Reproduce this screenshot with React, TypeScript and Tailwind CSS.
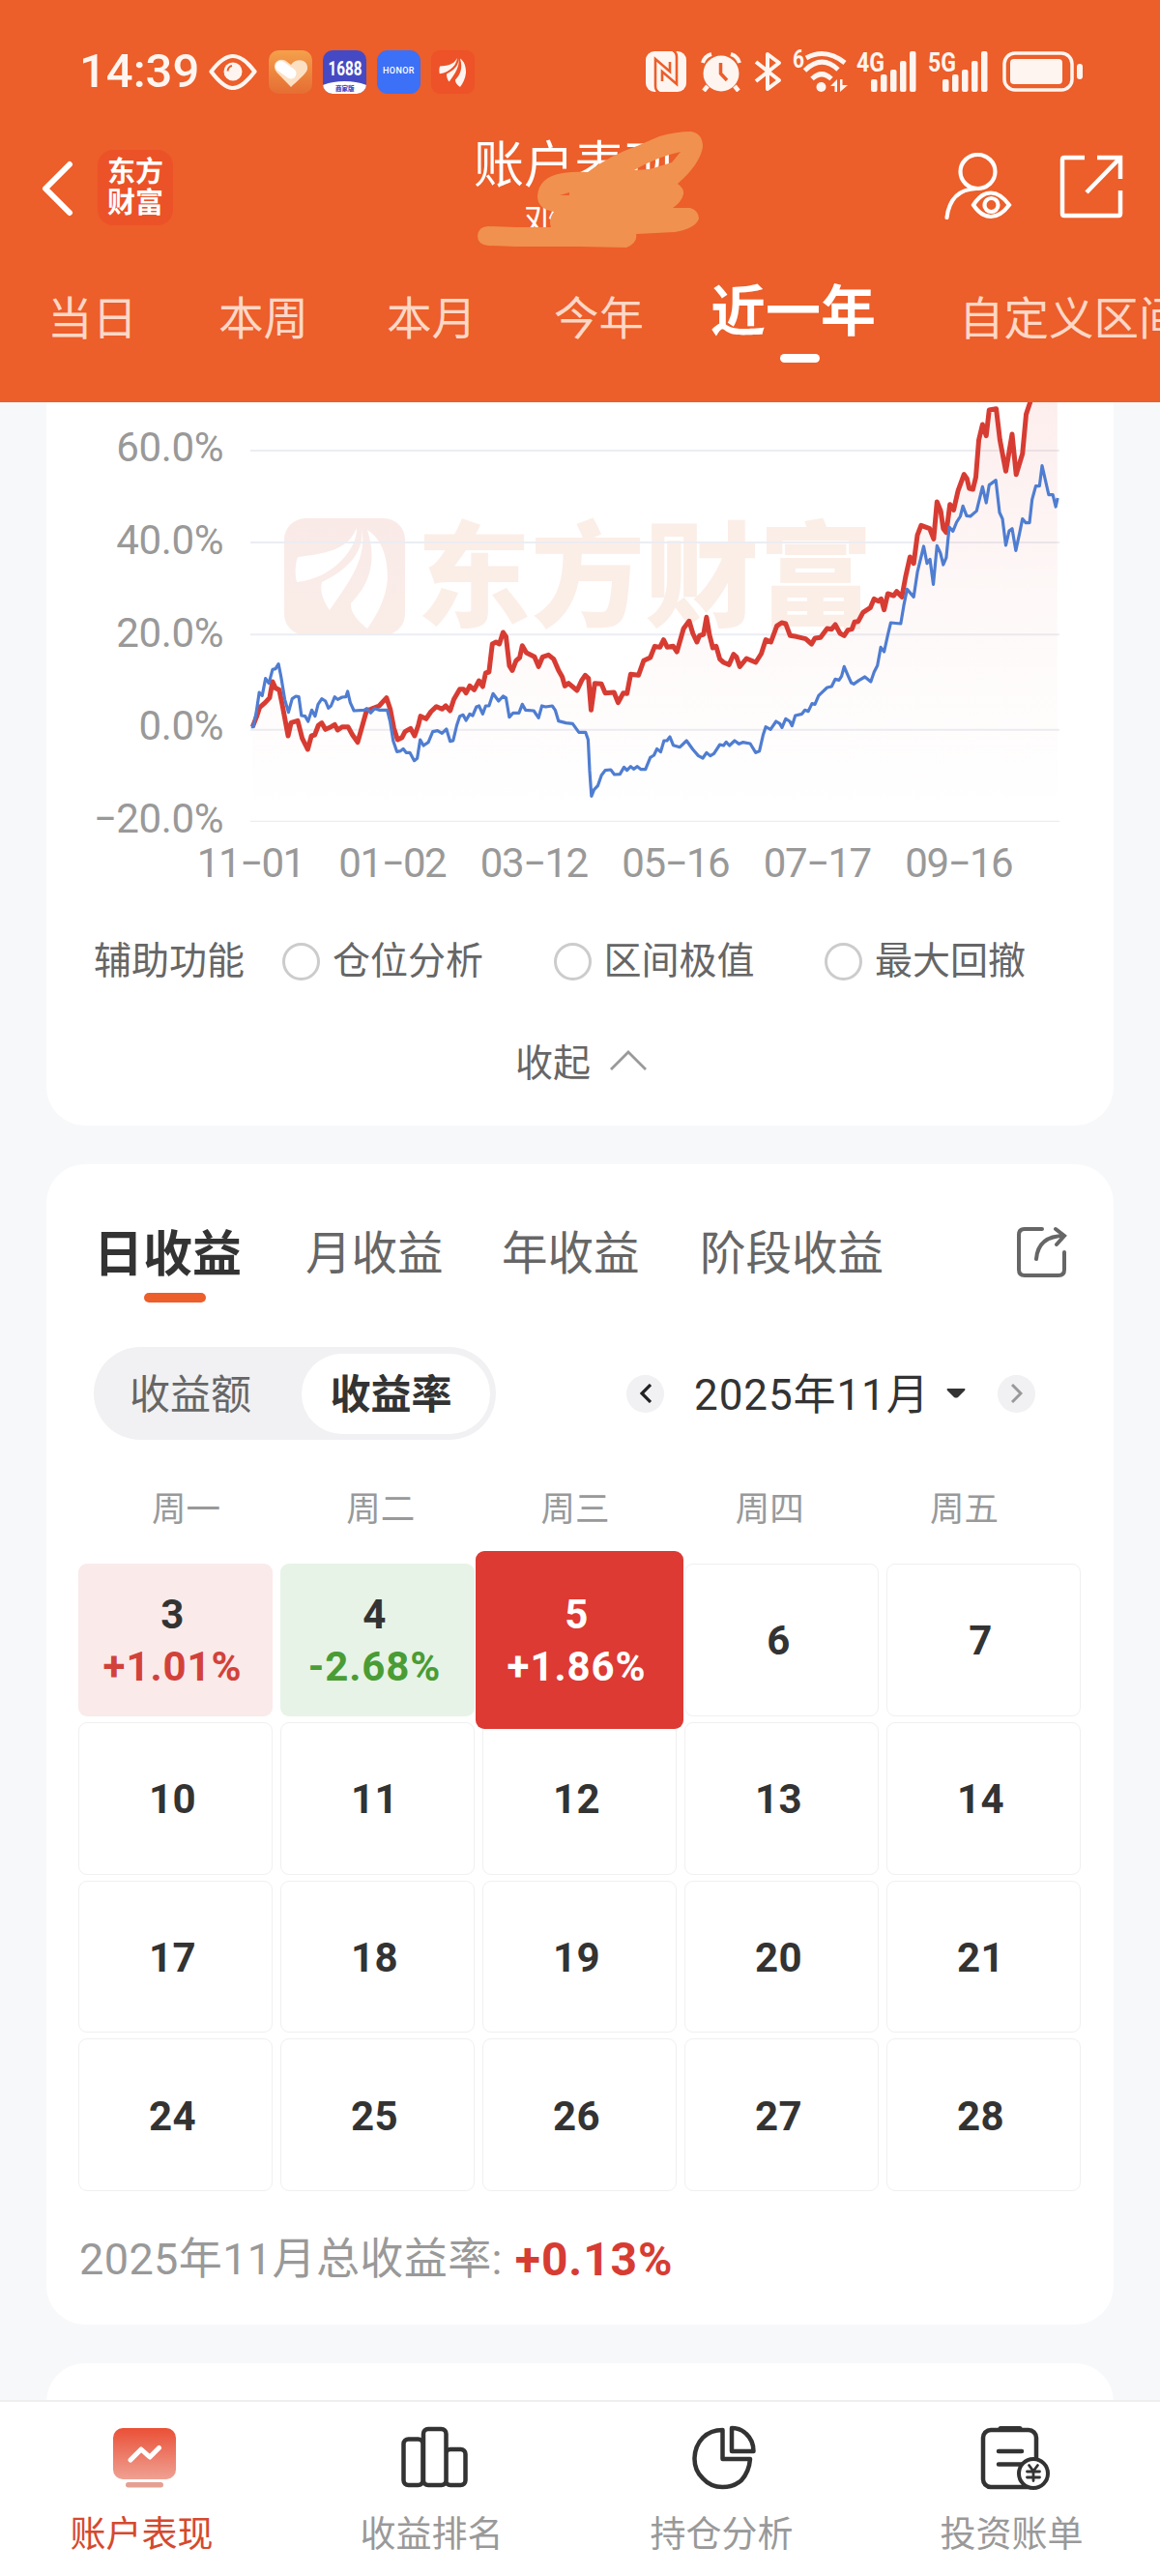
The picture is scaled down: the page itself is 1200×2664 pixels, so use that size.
import React from 'react';

const RED_LINE =
  '578,1055 590,1020 597,995 612,980 624,965 632,915 640,935 650,940 658,985 674,1083 682,1042 700,1036 712,1090 727,1125 737,1083 746,1080 756,1050 765,1043 775,1063 790,1055 800,1048 808,1065 820,1055 836,1055 848,1080 862,1103 875,1050 886,1005 898,1000 920,990 940,965 950,1000 960,1060 970,1095 982,1088 990,1070 1005,1060 1016,1083 1026,1050 1032,1022 1047,1030 1060,1008 1075,992 1090,1000 1100,990 1112,1005 1122,970 1138,938 1148,938 1155,950 1165,928 1177,940 1190,912 1200,930 1208,888 1217,885 1226,798 1236,792 1245,798 1255,762 1263,775 1272,865 1280,880 1290,850 1300,840 1307,803 1318,825 1340,838 1351,868 1362,838 1378,832 1392,845 1405,880 1415,900 1422,928 1432,920 1455,942 1468,910 1477,895 1486,905 1493,1003 1503,920 1521,922 1531,950 1555,948 1566,980 1580,950 1590,952 1600,892 1621,895 1635,850 1653,840 1665,805 1679,808 1689,785 1699,808 1715,805 1725,822 1743,750 1758,727 1768,765 1779,792 1786,772 1797,768 1805,715 1813,770 1822,810 1831,805 1841,845 1851,855 1866,862 1878,830 1886,838 1895,868 1913,843 1938,855 1953,828 1965,785 1979,792 1995,742 2008,732 2019,735 2031,772 2048,775 2073,782 2089,798 2098,780 2113,778 2131,750 2143,752 2153,738 2166,765 2177,772 2187,755 2198,752 2205,730 2215,728 2228,700 2248,685 2258,658 2269,665 2277,658 2285,692 2295,642 2311,648 2319,635 2333,652 2343,590 2355,528 2365,548 2375,460 2385,430 2408,440 2419,472 2428,357 2438,385 2445,440 2453,452 2463,365 2473,382 2485,322 2501,272 2509,285 2515,315 2525,318 2533,280 2541,165 2551,117 2561,152 2569,72 2588,68 2598,165 2614,262 2631,147 2642,272 2659,208 2669,85 2685,30';

const BLUE_LINE =
  '574,1055 580,1055 588,1010 596,948 604,958 613,905 622,920 632,877 640,875 648,860 655,900 665,970 675,1010 685,968 695,960 703,962 710,1020 720,1022 728,1038 738,1003 747,1022 755,985 765,968 775,975 783,997 790,990 800,962 808,970 820,963 830,962 835,945 842,980 852,1005 880,1003 887,998 897,1012 908,998 920,1003 942,1003 950,1040 958,1098 968,1132 978,1130 985,1123 993,1135 1003,1135 1015,1160 1023,1153 1031,1095 1040,1113 1053,1103 1065,1070 1078,1067 1090,1075 1102,1062 1112,1100 1120,1098 1130,1050 1138,1022 1147,1018 1155,1035 1165,1015 1173,1020 1183,993 1190,990 1200,1015 1208,990 1217,990 1228,952 1243,975 1255,960 1263,965 1272,1025 1282,1012 1298,1012 1307,985 1316,1003 1338,1005 1351,1027 1360,990 1370,993 1388,990 1396,1003 1405,1037 1425,1043 1443,1045 1460,1072 1478,1072 1485,1095 1489,1190 1494,1270 1501,1250 1511,1238 1521,1205 1531,1190 1546,1188 1556,1203 1571,1202 1582,1180 1590,1190 1600,1178 1608,1186 1618,1178 1628,1187 1640,1187 1653,1150 1663,1143 1671,1123 1681,1133 1690,1098 1698,1098 1706,1086 1715,1112 1733,1118 1751,1098 1768,1125 1783,1145 1795,1152 1805,1135 1815,1145 1825,1138 1841,1110 1851,1113 1858,1102 1867,1113 1881,1098 1893,1108 1903,1103 1923,1107 1938,1135 1948,1130 1958,1080 1965,1055 1978,1063 1993,1038 2003,1045 2009,1057 2019,1030 2030,1038 2036,1052 2045,1020 2063,1015 2071,1003 2080,1007 2090,983 2098,985 2108,958 2131,933 2143,930 2153,907 2163,910 2170,898 2177,868 2187,895 2196,918 2203,922 2218,910 2233,900 2249,915 2258,885 2267,865 2276,808 2285,822 2295,770 2303,732 2330,735 2338,680 2347,628 2365,652 2375,575 2392,495 2401,548 2409,535 2418,613 2428,493 2437,515 2445,552 2453,530 2461,435 2471,448 2481,420 2491,402 2498,370 2508,400 2518,402 2535,385 2551,310 2561,360 2569,305 2587,290 2597,390 2605,410 2614,492 2623,447 2631,440 2641,508 2651,455 2659,410 2668,422 2678,422 2685,350 2695,308 2705,308 2712,245 2723,300 2730,335 2741,335 2749,372 2754,345';

const gridLines = [198, 483, 769, 1064, 1349];
const yLabels = ['60.0%', '40.0%', '20.0%', '0.0%', '−20.0%'];
const xLabels = ['11−01', '01−02', '03−12', '05−16', '07−17', '09−16'];
const helpers = ['仓位分析', '区间极值', '最大回撤'];
const weekdays = ['周一', '周二', '周三', '周四', '周五'];

const days = [
  { day: 3, rate: '+1.01%', tone: 'up' },
  { day: 4, rate: '-2.68%', tone: 'down' },
  { day: 5, rate: '+1.86%', tone: 'active' },
  ...[6, 7, 10, 11, 12, 13, 14, 17, 18, 19, 20, 21, 24, 25, 26, 27, 28].map((day) => ({
    day,
    rate: '',
    tone: 'empty',
  })),
];

const Feather = ({ fill }: { fill: string }) => (
  <g fill={fill}>
    <path d="M75 10 C76 30 52 62 13 66 C11 58 11 48 14 40 C38 37 66 34 75 10Z" />
    <path d="M80 10 C86 40 70 62 47 95 C42 88 36 76 39 66 C60 56 84 38 80 10Z" />
    <path d="M86 12 C102 22 107 42 107 62 C105 84 96 100 86 114 C78 108 68 98 69 88 C84 72 98 50 86 12Z" />
  </g>
);

const Signal = ({ label }: { label: string }) => (
  <svg className="overflow-visible" width="64" height="46" viewBox="0 0 64 46">
    <text x="0" y="23" fontSize="27" fontWeight="700" fill="#fff5f0" textLength="29" lengthAdjust="spacingAndGlyphs" fontFamily="Roboto, sans-serif">
      {label}
    </text>
    <rect x="15" y="31" width="6.500" height="13" rx="2" fill="#fff5f0" />
    <rect x="25" y="26" width="6.500" height="18" rx="2" fill="#fff5f0" />
    <rect x="35" y="21" width="6.500" height="23" rx="2" fill="#fff5f0" />
    <rect x="45" y="12" width="6.500" height="32" rx="2" fill="#fff5f0" />
    <rect x="55" y="2" width="6.500" height="42" rx="2" fill="#fff5f0" />
  </svg>
);

const StatusBar = () => (
  <div className="flex h-[148px] items-center pl-[82px] text-[#fff5f0]">
    <span className="w-[122px] text-[49px] leading-[60px] font-medium whitespace-nowrap">14:39</span>
    <svg className="ml-3" width="50" height="38" viewBox="0 -2 50 38" fill="none" stroke="#fff5f0">
      <path d="M2.500 17 C10 7 17 1 25 1 S40 7 47.500 17 C40 27 33 34 25 34 S10 27 2.500 17Z" strokeWidth="4.200" strokeLinejoin="round" />
      <circle cx="25" cy="17" r="9.500" fill="#fff5f0" stroke="none" />
      <path d="M19.500 16.500 Q20 12 24 11" stroke="#ec5e2a" strokeWidth="2" />
    </svg>
    <svg className="ml-3" width="45" height="45" viewBox="0 0 45 45">
      <defs>
        <linearGradient id="heartBg" x1="0" y1="0" x2="0" y2="1">
          <stop offset="0" stopColor="#f4a04b" />
          <stop offset="1" stopColor="#e56d33" />
        </linearGradient>
      </defs>
      <rect width="45" height="45" rx="10" fill="url(#heartBg)" />
      <path d="M23 38 L8.500 23 C2 15 9 7 17 10.500 L23 15 C29 7 41 10 40 19 C39.500 23 36 26 23 38Z" fill="#fce0c4" />
      <path d="M12.500 16.500 L23 24" stroke="#fff" strokeWidth="11" strokeLinecap="round" />
    </svg>
    <svg className="ml-[11px] overflow-visible" width="45" height="45" viewBox="0 0 45 45">
      <clipPath id="app1688">
        <rect width="45" height="45" rx="10" />
      </clipPath>
      <g clipPath="url(#app1688)">
        <rect width="45" height="45" fill="#454ac4" />
        <ellipse cx="22.500" cy="44" rx="30" ry="12" fill="#fff" />
      </g>
      <text x="5.500" y="26" fontSize="20" fontWeight="700" fill="#fff" textLength="35" lengthAdjust="spacingAndGlyphs" fontFamily="Roboto, sans-serif">1688</text>
      <text x="13" y="41.500" fontSize="6.500" fontWeight="900" fill="#454ac4" fontFamily="'Noto Sans CJK SC', sans-serif">商家版</text>
    </svg>
    <div className="ml-[11px] flex h-[45px] w-[45px] items-center justify-center rounded-[11px] bg-[#3c70f6] text-[9px] font-medium tracking-[0.4px] text-white">
      HONOR
    </div>
    <svg className="ml-[11px]" width="45" height="45" viewBox="0 0 45 45">
      <rect width="45" height="45" rx="9" fill="#ed5228" />
      <g transform="translate(5 5) scale(.29 .29)">
        <Feather fill="#fff5f0" />
      </g>
    </svg>

    <svg className="ml-[177px]" width="42" height="42" viewBox="0 0 42 42">
      <rect width="42" height="42" rx="9" fill="#fff5f0" />
      <g fill="none" stroke="#ec5e2a" strokeWidth="2.600">
        <path d="M14 43 Q10 41 10 36 V8 L25 21 V11" />
        <path d="M28 -1 Q32 1 32 6 V34 L17 21 V31" />
      </g>
    </svg>
    <svg className="ml-[15px]" width="42" height="42" viewBox="0 0 42 42">
      <circle cx="21" cy="23" r="18.500" fill="#fff5f0" />
      <path d="M2 12 Q4 5 11 3 M40 12 Q38 5 31 3" stroke="#fff5f0" strokeWidth="4" fill="none" />
      <path d="M7 36 L3 41 M35 36 L39 41" stroke="#fff5f0" strokeWidth="4.500" />
      <path d="M20.500 12 V23 L27 30" stroke="#ec5e2a" strokeWidth="3.500" fill="none" />
    </svg>
    <svg className="ml-[13px]" width="29" height="42" viewBox="0 0 29 42" fill="none" stroke="#fff5f0" strokeWidth="4" strokeLinejoin="round">
      <path d="M2 11 L26 30 L14 39 V3 L26 12 L2 31" />
    </svg>
    <svg className="ml-[11px] overflow-visible" width="57" height="46" viewBox="0 0 57 46">
      <text x="0" y="19" fontSize="25" fontWeight="700" fill="#fff5f0" textLength="12" lengthAdjust="spacingAndGlyphs" fontFamily="Roboto, sans-serif">6</text>
      <g fill="none" stroke="#fff5f0" strokeWidth="5">
        <path d="M14 9 Q34 -2 54 14" />
        <path d="M12.500 22 Q30 5 47 21" />
        <path d="M20 30.500 Q30 21 40 30.500" />
      </g>
      <circle cx="29.500" cy="39" r="5" fill="#fff5f0" />
      <path d="M39 38 L46 31 V44 H43.500 V38Z M49 31 H51.500 V37 H57 L49 44Z" fill="#fff5f0" />
    </svg>
    <div className="mr-[13px] ml-[9px] flex gap-[10px]">
      <Signal label="4G" />
      <Signal label="5G" />
    </div>
    <svg width="84" height="42" viewBox="0 0 84 42">
      <rect x="2" y="2" width="70" height="38" rx="11" fill="none" stroke="#fff5f0" strokeWidth="3.500" />
      <rect x="8" y="8" width="54" height="26" rx="4" fill="#fff5f0" />
      <rect x="77" y="13" width="6" height="16" rx="3" fill="#fff5f0" />
    </svg>
  </div>
);

const TitleBar = () => (
  <div className="relative flex h-[106px] items-center">
    <svg className="mt-[-13px] ml-[43px]" width="33" height="58" viewBox="0 0 33 58" fill="none" stroke="#fff" strokeWidth="6" strokeLinecap="round" strokeLinejoin="round">
      <path d="M29 4 L4 29 L29 54" />
    </svg>
    <div className="mt-[-14px] ml-[25px] flex h-[78px] w-[78px] flex-col items-center justify-center rounded-[16px] bg-[#ec5228] text-[29px] leading-[32px] font-bold text-white">
      <span>东方</span>
      <span>财富</span>
    </div>
    <div className="ml-[310px] flex h-full w-[210px] flex-col items-center text-white">
      <span className="mt-[-4px] text-[52px] leading-[56px] whitespace-nowrap">账户表现</span>
      <span className="mt-[12px] mr-[68px] text-[36px] leading-[36px]">邓</span>
    </div>
    <svg className="mt-[-17px] ml-[278px]" width="70" height="70" viewBox="0 0 70 70" fill="none" stroke="#fff" strokeWidth="4.200" strokeLinecap="round">
      <ellipse cx="34.500" cy="19.500" rx="18" ry="17.500" />
      <path d="M2.500 67 Q6 38 33 37" />
      <path d="M30 54 Q38 41.500 48 41.500 T67 54 Q58 66 48 66 T30 54Z" />
      <circle cx="48.500" cy="54" r="7" />
    </svg>
    <svg className="mt-[-17px] ml-[49px]" width="66" height="66" viewBox="0 0 66 66" fill="none" stroke="#fff" strokeWidth="4.500">
      <path d="M26 3 H5 Q3 3 3 5 V61 Q3 63 5 63 H61 Q63 63 63 61 V37" />
      <path d="M39 3 H63 V25 M63 3 L28 39" />
    </svg>
    {/* marker strokes hiding the account name */}
    <svg className="absolute top-[-18px] left-[490px]" width="240" height="130" viewBox="490 130 240 130">
      <path
        fillRule="evenodd"
        fill="#f0914f"
        d="M505 234 L534 235 L570 235 Q567 227 573 219 Q556 216 556 203 Q557 183 582 179 Q595 177 608 178 Q632 160 659 151 L682 141 Q700 136 715 136 Q727 138 727 152 Q724 170 701 190 Q708 195 707 201 Q705 209 696 215 H714 Q723 218 723 226 Q720 236 698 240 L658 242 Q660 251 648 256 L600 255 H534 L505 254 Q494 253 494 244 Q495 234 505 234Z M656 176 L672 175 L695 168 L704 157 Q680 162 656 176Z M579 202 L589 202 V199Z"
      />
    </svg>
  </div>
);

const RangeTabs = () => (
  <div className="flex h-[162px] pl-[49px] text-[46.500px] leading-[153px] whitespace-nowrap text-[#fdd7c6]">
    <span className="w-[177px] shrink-0">当日</span>
    <span className="w-[174px] shrink-0">本周</span>
    <span className="w-[173px] shrink-0">本月</span>
    <span className="w-[162px] shrink-0">今年</span>
    <div className="flex w-[257px] shrink-0 flex-col text-[57px] font-bold text-white">
      <span className="mt-[-4px] h-[116px] leading-[146px]">近一年</span>
      <span className="ml-[72px] h-[9px] w-[41px] rounded-full bg-white" />
    </div>
    <span className="shrink-0">自定义区间</span>
  </div>
);

const ProfitChart = () => (
  <section className="mx-[48px] h-[748px] w-[1104px] rounded-b-[40px] bg-white">
    <div className="relative flex h-[434px]">
      <div className="absolute top-[116px] left-[246px] flex items-center">
        <svg width="125" height="121" viewBox="0 0 125 121">
          <defs>
            <linearGradient id="markBg" x1="0" y1="0" x2="0" y2="1">
              <stop offset="0" stopColor="#f9eae8" />
              <stop offset="1" stopColor="#faede7" />
            </linearGradient>
          </defs>
          <rect width="125" height="121" rx="22" fill="url(#markBg)" />
          <Feather fill="#fff" />
        </svg>
        <span className="mt-[7px] ml-[12px] text-[118px] leading-[121px] font-black text-[#fbeee7]">东方财富</span>
      </div>
      <div className="mt-[-1px] w-[183px] text-right text-[42px] leading-[96px] tracking-[-0.400px] text-[#999]">
        {yLabels.map((label) => (
          <div key={label}>{label}</div>
        ))}
      </div>
      <svg className="relative ml-[28px]" width="837" height="434" viewBox="572 48 2187 1302" preserveAspectRatio="none">
        <defs>
          <linearGradient id="area" gradientUnits="userSpaceOnUse" x1="0" y1="48" x2="0" y2="1320">
            <stop offset="0" stopColor="#e0443a" stopOpacity="0.09" />
            <stop offset="0.5" stopColor="#e0443a" stopOpacity="0.035" />
            <stop offset="1" stopColor="#e0443a" stopOpacity="0" />
          </linearGradient>
        </defs>
        {gridLines.map((y) => (
          <line key={y} x1="572" x2="2759" y1={y} y2={y} stroke="#ebedf2" strokeWidth="2" vectorEffect="non-scaling-stroke" />
        ))}
        <polygon points={`${RED_LINE} 2753,30 2753,1320 578,1320`} fill="url(#area)" />
        <polyline points={RED_LINE} fill="none" stroke="#d73c33" strokeWidth="5" strokeLinejoin="round" vectorEffect="non-scaling-stroke" />
        <polyline points={BLUE_LINE} fill="none" stroke="#4f7dd1" strokeWidth="3.200" strokeLinejoin="round" vectorEffect="non-scaling-stroke" />
      </svg>
    </div>
    <div className="ml-[138px] flex text-[42px] leading-[85px] tracking-[-1.500px] text-[#999]">
      {xLabels.map((label) => (
        <span key={label} className="w-[146.500px] text-center">
          {label}
        </span>
      ))}
    </div>
    <div className="mt-[19px] flex h-[80px] items-center pl-[49px] text-[39px] leading-none whitespace-nowrap text-[#666]">
      <span className="w-[195px]">辅助功能</span>
      {helpers.map((name) => (
        <div key={name} className="flex w-[280.500px] shrink-0 items-center">
          <span className="mr-[13px] h-[39px] w-[39px] rounded-full border-[3px] border-[#ccc]" />
          {name}
        </div>
      ))}
    </div>
    <div className="mt-[26px] flex h-[80px] items-center pl-[485px] text-[39px] leading-none text-[#666]">
      收起
      <svg className="mt-[-8px] ml-[20px]" width="38" height="21" viewBox="0 0 38 21" fill="none" stroke="#999" strokeWidth="2.800">
        <path d="M1 20 L19 2 L37 20" />
      </svg>
    </div>
  </section>
);

const DayCell = ({ day, rate, tone }: { day: number; rate: string; tone: string }) => {
  const tones: Record<string, string> = {
    up: 'bg-[#faeaea]',
    down: 'bg-[#e7f3e6]',
    active: 'relative z-10 -mx-[7px] -my-[13px] bg-[#dd3a33] text-white',
    empty: 'border-[1.500px] border-[#f0f0f1]',
  };
  const rates: Record<string, string> = { up: 'text-[#d2423a]', down: 'text-[#4a9c35]' };

  return (
    <div className={`flex flex-col items-center justify-center rounded-[9px] pt-[3px] pr-[6px] text-[42px] leading-[54px] font-bold ${tones[tone]}`}>
      <span className="tracking-[0.500px]">{day}</span>
      {rate && <span className={`tracking-[0.900px] ${rates[tone] || ''}`}>{rate}</span>}
    </div>
  );
};

const ProfitCalendar = () => (
  <section className="mx-[48px] mt-[40px] h-[1200px] w-[1104px] rounded-[40px] bg-white">
    <div className="flex h-[156px] pl-[51px] text-[47.500px] leading-[187px] whitespace-nowrap text-[#666]">
      <div className="flex w-[217px] shrink-0 flex-col text-[51px] font-bold text-[#333]">
        <span className="ml-[-2px] h-[133px]">日收益</span>
        <span className="ml-[50px] h-[10px] w-[64px] rounded-full bg-[#ec5e2a]" />
      </div>
      <span className="w-[203px] shrink-0">月收益</span>
      <span className="w-[205px] shrink-0">年收益</span>
      <span className="w-[328px] shrink-0">阶段收益</span>
      <svg className="mt-[64px]" width="52" height="54" viewBox="0 0 52 54" fill="none" stroke="#666" strokeWidth="4" strokeLinecap="round">
        <path d="M26 3 H8 Q2 3 2 9 V45 Q2 51 8 51 H43 Q49 51 49 45 V27" />
        <path d="M20 34 Q22 10 49 10 M40 3 L49 10 L41 19" />
      </svg>
    </div>

    <div className="mt-[33px] flex h-[96px] items-center pl-[49px]">
      <div className="flex h-[96px] w-[416px] items-center rounded-full bg-[#f1f1f3] text-[42px] text-[#666]">
        <span className="w-[215px] pt-[3px] pl-[37px]">收益额</span>
        <span className="flex h-[83px] w-[195px] items-center justify-center rounded-full bg-white pt-[3px] pr-[10px] font-bold text-[#333]">收益率</span>
      </div>
      <span className="ml-[135px] flex h-[39px] w-[39px] items-center justify-center rounded-full bg-[#f1f1f3]">
        <svg width="12" height="20" viewBox="0 0 12 20" fill="none" stroke="#222" strokeWidth="3.200">
          <path d="M11 1 L2 10 L11 19" />
        </svg>
      </span>
      <span className="ml-[31px] w-[242px] pt-[3px] text-[44px] tracking-[0.900px] whitespace-nowrap text-[#333]">2025年11月</span>
      <svg className="ml-[19px]" width="20" height="10" viewBox="0 0 20 10">
        <path d="M1 0 H19 Q20 1 19 2 L12 9 Q10 10 8 9 L1 2 Q0 1 1 0Z" fill="#333" />
      </svg>
      <span className="ml-[33px] flex h-[39px] w-[39px] items-center justify-center rounded-full bg-[#f1f1f3]">
        <svg width="12" height="20" viewBox="0 0 12 20" fill="none" stroke="#999" strokeWidth="3">
          <path d="M1 1 L10 10 L1 19" />
        </svg>
      </span>
    </div>

    <div className="mt-[32px] ml-[44px] grid w-[1006px] grid-cols-5 text-center text-[35.500px] leading-[80px] text-[#999]">
      {weekdays.map((w) => (
        <span key={w}>{w}</span>
      ))}
    </div>

    <div className="mt-[16px] ml-[33px] grid h-[649px] w-[1037px] grid-cols-5 grid-rows-4 gap-x-[8px] gap-y-[6px] text-[#333]">
      {days.map((d) => (
        <DayCell key={d.day} {...d} />
      ))}
    </div>

    <div className="flex h-[138px] items-center pt-[4px] pl-[34px] text-[45px] tracking-[0.400px] whitespace-nowrap text-[#999]">
      2025年11月总收益率:
      <span className="ml-[13px] text-[48px] font-bold tracking-[0.900px] text-[#d73c33]">+0.13%</span>
    </div>
  </section>
);

const navItems = [
  {
    label: '账户表现',
    icon: (
      <>
        <defs>
          <linearGradient id="navBg" x1="0" y1="0" x2="0" y2="1">
            <stop offset="0" stopColor="#ea5036" />
            <stop offset="1" stopColor="#efa193" />
          </linearGradient>
        </defs>
        <rect x="4" y="5" width="65" height="53" rx="10" fill="url(#navBg)" />
        <rect x="17" y="61" width="39" height="5.500" rx="2.700" fill="#e6a092" />
        <path d="M22 38 L33 27 L42 35 L51.500 25.500" fill="none" stroke="#fff" strokeWidth="5" strokeLinecap="round" strokeLinejoin="round" />
      </>
    ),
  },
  {
    label: '收益排名',
    icon: (
      <g fill="none" stroke="#333" strokeWidth="4.500">
        <rect x="4.500" y="16.500" width="20" height="47.500" rx="5" />
        <rect x="48" y="27" width="20.500" height="37" rx="5" />
        <rect x="25" y="6" width="23.500" height="58" rx="5" fill="#fff" />
      </g>
    ),
  },
  {
    label: '持仓分析',
    icon: (
      <g fill="none" stroke="#333" strokeWidth="4.500" strokeLinejoin="round">
        <path d="M34.500 7 V37 H63 Q62 50 54 59 Q46 66 34.500 66 Q22 66 14 57 Q5.500 49 5.500 37 Q5.500 24 14 15 Q22 7 34.500 7Z" />
        <path d="M44 5 V29 H66.500 Q66.500 18 59 11 Q53 5 44 5Z" />
      </g>
    ),
  },
  {
    label: '投资账单',
    icon: (
      <g fill="none" stroke="#333" strokeWidth="4.500" strokeLinecap="round">
        <rect x="4" y="7" width="55" height="59" rx="8" />
        <path d="M22 5.500 H42" strokeWidth="5" />
        <path d="M20 29 H44 M20 42.500 H44" />
        <circle cx="56" cy="52" r="15" fill="#fff" strokeWidth="4" />
        <path d="M51.500 43.500 L56 49.500 L60.500 43.500 M56 49.500 V59.500 M49.500 50 H62.500 M49.500 56 H62.500" strokeWidth="2.800" />
      </g>
    ),
  },
];

const BottomNav = () => (
  <nav className="grid h-[182px] grid-cols-4 border-t-2 border-[#eee] bg-white">
    {navItems.map((item, index) => (
      <div key={item.label} className="flex flex-col items-center pt-[22px] pr-[2px]">
        <svg width="73" height="73" viewBox="0 0 73 73">
          {item.icon}
        </svg>
        <span className={`mt-[19px] mr-[5px] text-[37px] leading-[48px] ${index === 0 ? 'text-[#d5492f]' : 'text-[#999]'}`}>{item.label}</span>
      </div>
    ))}
  </nav>
);

const App: React.FC = () => (
  <div className="flex h-[2664px] w-[1200px] flex-col overflow-hidden bg-[#f7f8fa] font-['Roboto','Noto_Sans_CJK_SC',sans-serif]">
    <header className="h-[416px] shrink-0 overflow-hidden bg-[#ec5e2a]">
      <StatusBar />
      <TitleBar />
      <RangeTabs />
    </header>
    <main className="min-h-0 flex-1 overflow-hidden">
      <ProfitChart />
      <ProfitCalendar />
      <section className="mx-[48px] mt-[40px] h-[80px] rounded-t-[40px] bg-white" />
    </main>
    <BottomNav />
  </div>
);

export default App;
